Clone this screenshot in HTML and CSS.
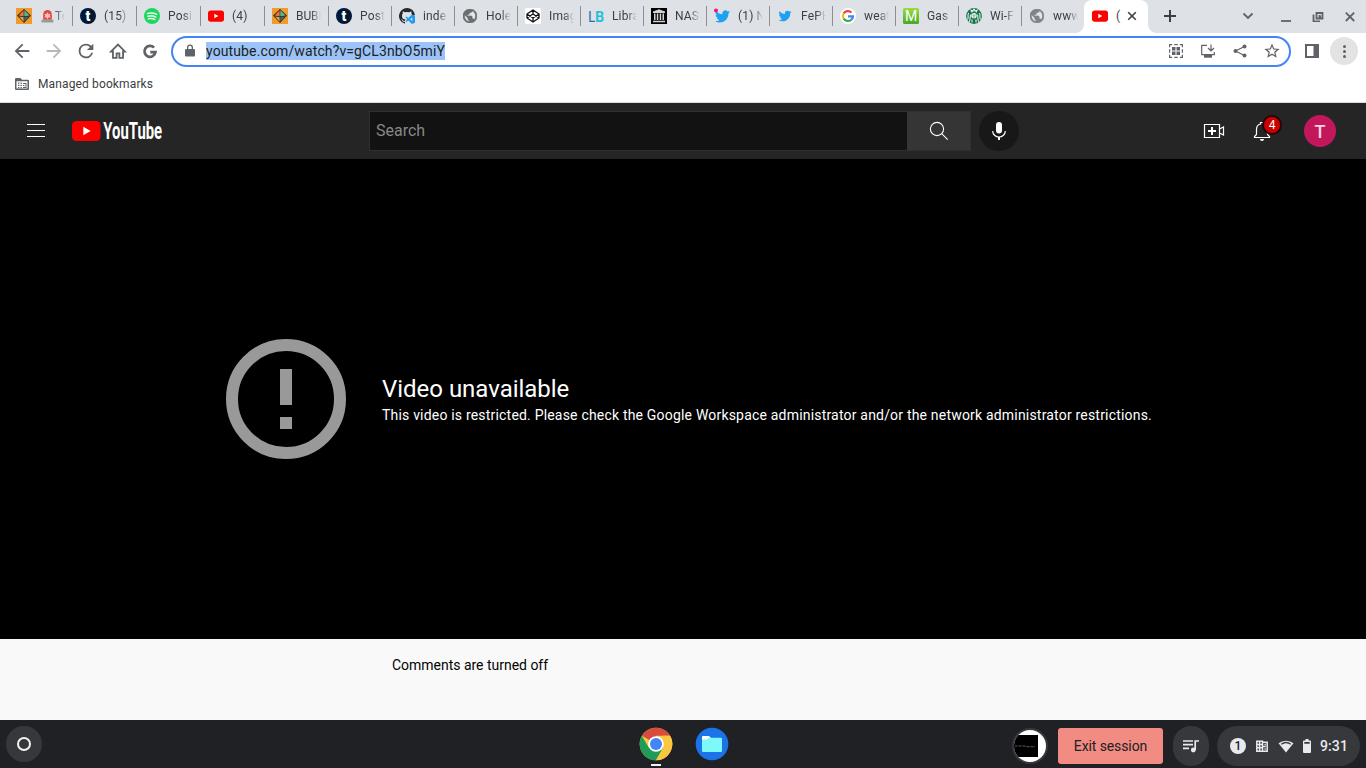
FILE: index.html
```html
<!DOCTYPE html>
<html lang="en">
<head>
<meta charset="utf-8">
<title>YouTube</title>
<link rel="stylesheet" href="styles.css">
</head>
<body>
<svg class="defs" width="0" height="0" aria-hidden="true">
  <symbol id="cube" viewBox="0 0 16 16"><path fill="#f29a2e" d="M0 0h16v16H0z"/><path fill="#3b2c2b" d="M8 1 15 7.500 8 15 1 7.500z"/><path fill="#e9783f" d="M7.600 2.500v5.800L2.600 7.400z"/><path fill="#5fb58c" d="M8.300 2.300v6l5.400-.9z"/><path fill="#35725c" d="M8.300 9.200v4.600L13 8.500z"/><path fill="#e2a04a" d="M7.600 9.200v4.600L3 8.500z"/></symbol>
  <symbol id="tumblr" viewBox="0 0 16 16"><circle cx="8" cy="8" r="8" fill="#001935"/><text x="8" y="12.600" text-anchor="middle" font-family="Roboto, sans-serif" font-weight="900" font-size="14" fill="#fff">t</text></symbol>
  <symbol id="ytfav" viewBox="0 0 16 16"><rect y="2.400" width="16" height="11.400" rx="2.800" fill="red"/><path fill="#fff" d="M6.300 5.800 10.400 8 6.300 10.300z"/></symbol>
  <symbol id="globe" viewBox="2 2 20 20"><circle cx="12" cy="12" r="9" fill="#e4e6ea"/><path fill="#6a6c70" stroke="#6a6c70" stroke-width=".9" d="M12 2C6.480 2 2 6.480 2 12s4.480 10 10 10 10-4.480 10-10S17.520 2 12 2zm-1 17.930c-3.950-.49-7-3.850-7-7.930 0-.62.080-1.210.210-1.790L9 15v1c0 1.100.900 2 2 2v1.930zm6.900-2.540c-.26-.81-1-1.390-1.900-1.390h-1v-3c0-.55-.45-1-1-1H8v-2h2c.55 0 1-.45 1-1V7h2c1.100 0 2-.9 2-2v-.41c2.930 1.190 5 4.060 5 7.410 0 2.080-.8 3.970-2.100 5.390z"/></symbol>
  <symbol id="bird" viewBox="0 0 24 24"><path fill="#1da1f2" d="M23.953 4.57a10 10 0 01-2.825.775 4.958 4.958 0 002.163-2.723c-.951.555-2.005.959-3.127 1.184a4.92 4.92 0 00-8.384 4.482C7.69 8.095 4.067 6.13 1.64 3.162a4.822 4.822 0 00-.666 2.475c0 1.71.87 3.213 2.188 4.096a4.904 4.904 0 01-2.228-.616v.06a4.923 4.923 0 003.946 4.827 4.996 4.996 0 01-2.212.085 4.936 4.936 0 004.604 3.417 9.867 9.867 0 01-6.102 2.105c-.39 0-.779-.023-1.17-.067a13.995 13.995 0 007.557 2.209c9.053 0 13.998-7.496 13.998-13.985 0-.21 0-.42-.015-.63A9.935 9.935 0 0024 4.59z"/></symbol>
</svg>

<div class="tabstrip">
  <div class="tab wide"><svg class="fav"><use href="#cube"/></svg><span class="title"><svg class="siren" viewBox="0 0 12 12"><path fill="#e8453c" d="M2 9V4a4 4 0 0 1 8 0v5z"/><path fill="#ffc9c0" d="m6 2 1 2 2-.5L8 5.300 9 7 7 6.700 6 8.500 5 6.700 3 7l1-1.700L3 3.500 5 4z"/><path fill="#8f9aa3" d="M.5 9h11v2.500H.5z"/></svg>To</span></div>
  <div class="tab wide"><svg class="fav"><use href="#tumblr"/></svg><span class="title">(15)</span></div>
  <div class="tab wide"><svg class="fav" viewBox="0 0 16 16"><circle cx="8" cy="8" r="8" fill="#1ed760"/><path fill="none" stroke="#e6f7ec" stroke-linecap="round" stroke-width="1.600" d="M3.600 5.600c3-.9 6.300-.6 9 .8M4 8.300c2.700-.8 5.300-.4 7.700.8M4.400 10.800c2.200-.6 4.400-.3 6.300.7"/></svg><span class="title">Posi</span></div>
  <div class="tab wide"><svg class="fav"><use href="#ytfav"/></svg><span class="title">(4)</span></div>
  <div class="tab wide"><svg class="fav"><use href="#cube"/></svg><span class="title tight">BUBE</span></div>
  <div class="tab"><svg class="fav"><use href="#tumblr"/></svg><span class="title">Post</span></div>
  <div class="tab"><svg class="fav" viewBox="0 0 16 16"><path fill="#24292e" d="M8 0a8 8 0 0 0-2.500 15.600c.4.100.5-.2.500-.4v-1.400c-2.200.5-2.700-1-2.700-1-.4-.8-.9-1.100-.9-1.100-.7-.5.100-.5.100-.5.800.1 1.200.8 1.200.8.700 1.200 1.900.9 2.300.7.100-.5.300-.9.500-1.100L4.500 11C3.300 10.300 3 9.200 3 7.700c0-1 .3-1.600.8-2.200-.1-.2-.4-1 .1-2.100 0 0 .700-.2 2.200.8a7.500 7.500 0 0 1 4 0c1.500-1 2.200-.8 2.200-.8.500 1.100.2 1.900.1 2.100.4.500.6 1 .7 1.700H16A8 8 0 0 0 8 0z"/><path fill="#1f9cf0" d="m13 6.500 3 1.300v7L13 16l-3.700-3.500L7.500 14l-1-.7 1.700-2-1.700-2 1-.8 1.800 1.500zm.3 3-2.200 1.800 2.200 1.800z"/></svg><span class="title">inde</span></div>
  <div class="tab"><svg class="fav sm"><use href="#globe"/></svg><span class="title">Hole</span></div>
  <div class="tab"><svg class="fav" viewBox="0 0 16 16"><rect width="16" height="16" rx="1.500" fill="#fff"/><path fill="none" stroke="#111" stroke-width="1.300" stroke-linejoin="round" d="M8 2 14 6v4l-6 4-6-4V6zM8 2v4M8 10v4M2 6l6 4 6-4M2 10l6-4 6 4"/></svg><span class="title">Imag</span></div>
  <div class="tab"><svg class="fav" viewBox="0 0 16 16"><text x="0" y="14" font-family="Lato, sans-serif" font-size="15" fill="#2472a4" textLength="7" lengthAdjust="spacingAndGlyphs">L</text><text x="7" y="14" font-family="Lato, sans-serif" font-weight="900" font-size="15" fill="#1fc2da" textLength="9" lengthAdjust="spacingAndGlyphs">B</text></svg><span class="title">Libra</span></div>
  <div class="tab"><svg class="fav" viewBox="0 0 16 16"><path d="M0 0h16v16H0z"/><path fill="#d4d4d4" d="M8 1.200 14 3.500V5H2V3.500zM3 5.600h1.500V12H3zM5.800 5.600h1.500V12H5.800zM8.700 5.600h1.500V12H8.700zM11.500 5.600H13V12h-1.500zM2 12.800h12v1.500H2z"/></svg><span class="title">NAS</span></div>
  <div class="tab"><svg class="fav" viewBox="0 0 16 16"><use href="#bird" x="1" y="1" width="15" height="15"/><circle cx="2" cy="2.500" r="2" fill="#f0147c"/></svg><span class="title">(1) N</span></div>
  <div class="tab"><svg class="fav" viewBox="0 0 16 16"><use href="#bird" x="1.500" y="1.500" width="13" height="13"/></svg><span class="title">FePH</span></div>
  <div class="tab"><svg class="fav" viewBox="0 0 16 16"><circle cx="8" cy="8" r="8" fill="#fff"/><g fill="none" stroke-width="2.200"><path stroke="#ea4335" d="M3.600 5.500a5 5 0 0 1 7.800-1"/><path stroke="#fbbc05" d="M3.600 5.500a5 5 0 0 0 0 5"/><path stroke="#34a853" d="M3.600 10.500a5 5 0 0 0 7.700 1.200"/><path stroke="#4285f4" d="M8 8.300h5a5 5 0 0 1-1.700 3.400"/></g></svg><span class="title">weat</span></div>
  <div class="tab"><svg class="fav" viewBox="0 0 16 16"><linearGradient id="lime" x2="0" y2="1"><stop stop-color="#9bdc45"/><stop offset="1" stop-color="#46aa27"/></linearGradient><rect width="16" height="16" rx="1.500" fill="url(#lime)"/><text x="8" y="13" text-anchor="middle" font-family="Roboto, sans-serif" font-size="14" fill="#fff">M</text></svg><span class="title">Gas</span></div>
  <div class="tab"><svg class="fav" viewBox="0 0 16 16"><circle cx="8" cy="8" r="7.900" fill="#17734d"/><path fill="none" stroke="#e9f3ee" stroke-width="1.100" d="M8 .8 9 3l2-.7-1 2.200M8 .8 7 3l-2-.7 1 2.200M5 6.500C3 9 5.500 10 3 14M11 6.500c2 2.500-.5 3.500 2 7.500M2.800 5C.5 8 3.600 9 1.400 11.500M13.200 5c2.300 3-.8 4 1.400 6.500M6 14.500v-3M10 14.500v-3"/><circle cx="8" cy="7.700" r="2.700" fill="#e9f3ee"/><path stroke="#17734d" stroke-width=".6" d="M6.500 7.200h3M7 9h2"/></svg><span class="title">Wi-F</span></div>
  <div class="tab"><svg class="fav sm faded"><use href="#globe"/></svg><span class="title">www</span></div>
  <div class="tab active"><svg class="fav"><use href="#ytfav"/></svg><span class="title">(</span><svg class="close" viewBox="0 0 10 10"><path d="m1.200 1.200 7.600 7.600m0-7.600-7.600 7.600"/></svg></div>
  <svg class="plus" viewBox="0 0 12 12"><path d="M6 0v12M0 6h12"/></svg>
  <div class="window-controls">
    <svg viewBox="0 0 12 12"><path d="m1.500 3.500 4.500 4.500 4.500-4.500"/></svg>
    <svg viewBox="0 0 12 12"><path d="M1 11h10"/></svg>
    <svg viewBox="0 0 12 12"><path d="M4.500 3h6v5.500h-6zM1.500 4.500v7H8M7.500 5v1.500H9"/></svg>
    <svg viewBox="0 0 12 12"><path d="m1.800 2.600 8.400 8.400m0-8.400-8.400 8.400"/></svg>
  </div>
</div>

<div class="toolbar">
  <div class="nav">
    <svg viewBox="0 0 24 24"><path d="M20 11H7.830l5.590-5.590L12 4l-8 8 8 8 1.410-1.410L7.830 13H20z"/></svg>
    <svg class="off" viewBox="0 0 24 24"><path d="m12 4-1.410 1.410L16.170 11H4v2h12.170l-5.580 5.590L12 20l8-8z"/></svg>
    <svg viewBox="0 0 24 24"><path d="M17.650 6.350A7.960 7.960 0 0 0 12 4a8 8 0 1 0 7.730 10h-2.080A6 6 0 1 1 12 6c1.660 0 3.140.69 4.220 1.780L13 11h7V4z"/></svg>
    <svg viewBox="0 0 24 24"><path fill="none" stroke="#5f6368" stroke-width="2" d="M4.500 12.500 12 5l7.500 7.500H17.500v7h-4v-5h-3v5h-4v-7z"/></svg>
    <svg viewBox="0 0 24 24"><path fill="none" stroke="#5f6368" stroke-width="3" d="M16.400 8.300a6 6 0 1 0 1.500 5h-5.600"/></svg>
  </div>
  <div class="omnibox">
    <svg class="lock" viewBox="0 0 10 14"><path d="M9 5H8V3.500a3 3 0 0 0-6 0V5H1a1 1 0 0 0-1 1v5.500a1 1 0 0 0 1 1h8a1 1 0 0 0 1-1V6a1 1 0 0 0-1-1zM3.300 5V3.500a1.700 1.700 0 0 1 3.400 0V5z"/></svg>
    <span class="url">youtube.com/watch?v=gCL3nbO5miY</span>
    <div class="actions">
      <svg viewBox="0 0 16 16"><path class="ln" d="M1.600 4.200V1.600h2.600M6.300 1.600h3.400M11.800 1.600h2.600v2.600M14.400 6.300v3.400M14.400 11.800v2.600h-2.600M9.700 14.400H6.300M4.200 14.400H1.600v-2.600M1.600 9.700V6.300"/><path d="M4 4h3.500v3.500H4zM8.500 4H12v3.500H8.500zM4 8.500h3.500V12H4zM8.500 8.500H12V12H8.500z"/></svg>
      <svg viewBox="0 0 16 16"><path class="ln" d="M7 2.300H1.700v9.400h12.600V9M11 1.500v6M8 5l3 3 3-3"/><path d="M4 12h8v2.700H4z"/></svg>
      <svg viewBox="0 0 16 16"><path class="ln" d="M12.500 3.500 3.500 8l9 4.500"/><circle cx="12.500" cy="3.500" r="2"/><circle cx="3.500" cy="8" r="2"/><circle cx="12.500" cy="12.500" r="2"/></svg>
      <svg viewBox="1.500 1.500 21 21"><path d="m22 9.240-7.190-.62L12 2 9.190 8.630 2 9.240l5.460 4.730L5.820 21 12 17.270 18.180 21l-1.630-7.030zM12 15.400l-3.760 2.270 1-4.280-3.320-2.880 4.380-.38L12 6.100l1.710 4.040 4.380.38-3.320 2.880 1 4.280z"/></svg>
    </div>
  </div>
  <svg class="panel" viewBox="0 0 14 14"><path d="M0 0h14v14H0zm2 2v10h6.500V2z" fill-rule="evenodd"/></svg>
  <div class="more"><i></i><i></i><i></i></div>
</div>

<div class="bookmarks">
  <svg viewBox="0 0 14 12"><path fill-rule="evenodd" d="M1 0h4.500L7 1.700h6a1 1 0 0 1 1 1V11a1 1 0 0 1-1 1H1a1 1 0 0 1-1-1V1a1 1 0 0 1 1-1zm.5 3.300v7.200h11V3.300z"/><path d="M3 4.500h1.400v1.300H3zM5.500 4.500h1.400v1.300H5.500zM3 6.700h1.400V8H3zM5.500 6.700h1.400V8H5.500zM3 8.900h1.400v1.300H3zM5.500 8.900h1.400v1.300H5.500zM8 5h3.500v1H8zM10.500 5h1v5h-1zM8 7h1.400v1H8zM8 9h3.500v1H8z"/></svg>
  <span>Managed bookmarks</span>
</div>

<header class="masthead">
  <div class="burger"><i></i><i></i><i></i></div>
  <svg class="logo" viewBox="0 0 92 22"><rect y="1" width="28.500" height="20" rx="4.500" fill="red"/><path fill="#fff" d="M11.300 6.800v8.500l7.300-4.250z"/><text x="31.300" y="19.300" font-family="Roboto, sans-serif" font-weight="700" font-size="24" fill="#fff" textLength="58.800" lengthAdjust="spacingAndGlyphs">YouTube</text></svg>
  <div class="search"><div class="field">Search</div><div class="go"><svg viewBox="0 0 24 24"><circle cx="10" cy="10" r="6.600"/><path d="m14.700 14.700 6 6"/></svg></div></div>
  <div class="mic"><svg viewBox="0 0 24 24"><rect x="9" y="3" width="6" height="11.500" rx="3" fill="#fff"/><path fill="none" stroke="#fff" stroke-width="1.200" d="M5.700 12a6.300 6 0 0 0 12.600 0"/><path stroke="#fff" stroke-width="2" d="M12 18v3"/></svg></div>
  <div class="account">
    <svg viewBox="0 0 24 24"><path d="M2.500 5.500h15v13h-15zM17.500 10l4-2v8l-4-2"/><path stroke-width="2" d="M10 8v8M6 12h8"/></svg>
    <div class="bell"><svg viewBox="0 0 24 24"><path d="M4.500 18.500v-1l2-2v-5c0-3 1.500-5 4-5.500V3.500h3V5c2.500.5 4 2.500 4 5.500v5l2 2v1z"/><path fill="#fff" stroke="none" d="M10 20h4a2 2 0 0 1-4 0z"/></svg><span class="badge">4</span></div>
    <div class="avatar">T</div>
  </div>
</header>

<main class="player">
  <svg viewBox="0 0 120 120"><circle cx="60" cy="60" r="54" fill="none" stroke="#999" stroke-width="12"/><path fill="#999" d="M54 30h12v36H54zM54 78h12v12H54z"/></svg>
  <div class="message"><h1>Video unavailable</h1><p>This video is restricted. Please check the Google Workspace administrator and/or the network administrator restrictions.</p></div>
</main>
<section class="comments">Comments are turned off</section>

<footer class="shelf">
  <div class="round launcher"><i></i></div>
  <div class="apps">
    <div class="app running"><svg viewBox="0 0 34 34"><circle cx="17" cy="17" r="16.300" fill="#fbc640"/><path fill="#d84b40" d="M2.900 8.800a16.300 16.300 0 0 1 28.200 0H17v8z"/><path fill="#1e9c58" d="M2.900 8.800A16.300 16.300 0 0 0 17 33.300l7-12.200-7-4.100-7 4.100z"/><path fill="#fbc640" d="M31.100 8.800A16.300 16.300 0 0 1 17 33.300l7-12.200V8.800z"/><circle cx="17" cy="17" r="7.800" fill="#fff"/><circle cx="17" cy="17" r="6" fill="#4285f4"/></svg></div>
    <div class="app"><svg viewBox="0 0 34 34"><circle cx="17" cy="17" r="16.300" fill="#1a73e8"/><path fill="#fff" d="M7 10a1 1 0 0 1 1-1h6l2.500 2.500V15H7z"/><path fill="#7cf9f8" d="M7 12.500h5l2-1.700h12a1 1 0 0 1 1 1V24a1 1 0 0 1-1 1H8a1 1 0 0 1-1-1z"/></svg></div>
  </div>
  <div class="status">
    <div class="round thumb"><svg viewBox="0 0 32 32"><clipPath id="disc"><circle cx="16" cy="16" r="16"/></clipPath><g clip-path="url(#disc)"><path fill="#fff" d="M0 0h32v32H0z"/><path d="M0 5h24v22H0z"/><path stroke="#777" stroke-width=".8" stroke-dasharray="2 .6 1 .5" fill="none" d="M1 16h10l1 .7h9"/></g></svg></div>
    <div class="exit">Exit session</div>
    <div class="round media"><svg viewBox="0 0 18 16"><path fill="none" stroke="#e8eaed" stroke-width="1.700" d="M1 3h10M1 6.700h10M1 10.400h6M13.200 12V3H17"/><circle cx="11.300" cy="12" r="2.400" fill="#e8eaed"/></svg></div>
    <div class="tray">
      <span class="count">1</span>
      <svg viewBox="0 0 14 14"><path fill="none" stroke="#e8eaed" stroke-width="1.500" d="M1.800 2.200h5.700v10H1.800zM4.600 2.200v10M1.800 5.500h5.700M1.800 8.800h5.700M7.500 3.200h4.700v9H7.500M7.500 7.600h3.300M9.500 5.400h1.300M9.500 9.900h1.300"/></svg>
      <svg class="wifi" viewBox="0 0 16 14"><path fill="#e8eaed" d="M8 13.500.5 4.300a12 12 0 0 1 15 0z"/><path fill="none" stroke="#3c3d40" stroke-width="1.300" d="M3.200 5.300a8 8 0 0 1 9.600 0"/></svg>
      <svg class="battery" viewBox="0 0 8 14"><path fill="#e8eaed" fill-rule="evenodd" d="M2.500 0h3v1.500H7a1 1 0 0 1 1 1V13a1 1 0 0 1-1 1H1a1 1 0 0 1-1-1V2.500a1 1 0 0 1 1-1h1.500zM1.300 3v1.700h5.400V3z"/></svg>
      <span class="time">9:31</span>
    </div>
  </div>
</footer>
</body>
</html>
```
FILE: styles.css
```css
* { box-sizing: border-box; }
body { margin: 0; width: 1366px; height: 768px; overflow: hidden; display: flex; flex-direction: column; background: #fff; font-family: Roboto, sans-serif; }
svg { display: block; flex: none; }
.defs { position: absolute; }

.tabstrip { flex: none; height: 33px; padding-left: 8px; display: flex; background: #dee1e6; color: #3c4043; font-size: 12px; }
.tab { flex: none; width: 63px; display: flex; align-items: center; padding: 0 8px 1px; position: relative; }
.tab.wide { width: 64px; }
.tab + .tab:not(.active)::before { content: ""; position: absolute; left: 0; top: 6px; width: 1px; height: 20px; background: #8b8f95; }
.fav { width: 16px; height: 16px; }
.fav.sm { width: 14px; height: 14px; margin: 0 1px; }
.faded { opacity: .8; }
.title { flex: none; display: flex; align-items: center; white-space: pre; overflow: hidden; width: 25px; height: 20px; margin-left: 8px; letter-spacing: .15px; -webkit-mask-image: linear-gradient(90deg, #000 60%, transparent); mask-image: linear-gradient(90deg, #000 60%, transparent); }
.title.tight { letter-spacing: -.1px; }
.siren { width: 13px; height: 13px; margin: 0 1px; }
.tab.active { width: 64px; background: #fff; border-radius: 8px 8px 0 0; }
.tab.active::before, .tab.active::after { content: ""; position: absolute; bottom: 0; width: 8px; height: 8px; }
.tab.active::before { left: -8px; background: radial-gradient(circle at 0 0, transparent 7.5px, #fff 8px); }
.tab.active::after { right: -8px; background: radial-gradient(circle at 100% 0, transparent 7.5px, #fff 8px); }
.tab.active .title { width: 6px; mask-image: none; -webkit-mask-image: none; }
.close { width: 10px; height: 10px; margin-left: 5px; stroke: #3c4043; stroke-width: 1.6; }
.plus { width: 12px; height: 12px; margin: 10px 0 0 16px; stroke: #3c4043; stroke-width: 2; }
.window-controls { margin-left: auto; padding: 10px 10px 0 0; display: flex; gap: 20px; }
.window-controls svg { width: 12px; height: 12px; fill: none; stroke: #5f6368; stroke-width: 1.8; }
.window-controls svg:first-child { margin-right: 6px; }

.toolbar { flex: none; height: 36px; display: flex; align-items: center; padding-left: 11px; }
.nav { display: flex; gap: 10px; width: 160px; fill: #5f6368; }
.nav svg { width: 22px; height: 22px; }
.nav .off { opacity: .45; }
.omnibox { width: 1120px; height: 31px; border: 2px solid #4285f4; border-radius: 16px; display: flex; align-items: center; padding: 0 9px 0 12px; }
.lock { width: 10px; height: 14px; fill: #5f6368; }
.url { margin-left: 11px; height: 18px; line-height: 18px; font-size: 14px; letter-spacing: .12px; color: #202124; background: #9cc3f8; }
.actions { margin-left: auto; display: flex; gap: 16px; fill: #5f6368; }
.actions svg { width: 16px; height: 16px; }
.ln { fill: none; stroke: #5f6368; stroke-width: 1.2; }
.panel { width: 14px; height: 14px; margin-left: 14px; fill: #5f6368; }
.more { width: 28px; height: 28px; margin-left: 11px; border-radius: 50%; background: #e3e3e3; display: flex; flex-direction: column; align-items: center; justify-content: center; gap: 2px; }
.more i { width: 3px; height: 3px; border-radius: 50%; background: #5f6368; }

.bookmarks { flex: none; height: 34px; border-bottom: 1px solid #dadce0; display: flex; align-items: center; gap: 9px; padding: 0 0 3px 15px; font-size: 12px; letter-spacing: .13px; color: #3c4043; }
.bookmarks svg { width: 14px; height: 12px; fill: #5f6368; }

.masthead { flex: none; height: 56px; background: #252525; display: flex; align-items: center; padding: 0 30px 0 27px; }
.burger { width: 18px; display: flex; flex-direction: column; gap: 5px; margin-top: -1px; }
.burger i { height: 1px; background: #fff; }
.logo { width: 92px; height: 22px; margin-left: 27px; }
.search { display: flex; margin-left: 205px; width: 602px; height: 40px; border: 1px solid #303030; }
.field { flex: 1; background: #121212; color: #888; font-size: 16px; line-height: 38px; padding-left: 6px; }
.go { width: 63px; background: #353535; display: flex; align-items: center; justify-content: center; }
.go svg { width: 24px; height: 24px; fill: none; stroke: #fff; stroke-width: 1.1; }
.mic { width: 40px; height: 40px; margin-left: 8px; border-radius: 50%; background: #181818; display: flex; align-items: center; justify-content: center; }
.mic svg { width: 24px; height: 24px; }
.account { margin-left: auto; display: flex; align-items: center; }
.account svg { width: 24px; height: 24px; fill: none; stroke: #fff; stroke-width: 1.2; }
.bell { position: relative; margin: 0 30px 0 24px; }
.badge { position: absolute; left: 12px; top: -4px; width: 20px; height: 20px; border: 2px solid #2b0000; border-radius: 50%; background: #c00; color: #fff; font-size: 12px; line-height: 16px; text-align: center; }
.avatar { width: 32px; height: 32px; border-radius: 50%; background: #c2185b; color: #f6d5e1; font-size: 18px; font-weight: 500; line-height: 33px; text-align: center; }

.player { flex: none; height: 480px; background: #000; display: flex; align-items: center; padding-left: 226px; color: #fff; }
.player > svg { width: 120px; height: 120px; }
.message { margin-left: 36px; }
.message h1 { margin: 0; font-size: 24px; font-weight: 400; line-height: 30px; letter-spacing: -.02px; }
.message p { margin: 1px 0 0; font-size: 14px; line-height: 20px; letter-spacing: .193px; white-space: nowrap; }
.comments { flex: none; height: 81px; background: #f9f9f9; padding: 16px 0 0 392px; font-size: 14px; line-height: 20px; letter-spacing: -.02px; color: #030303; }

.shelf { flex: none; height: 48px; background: #202124; display: grid; grid-template-columns: 1fr 90px 1fr; align-items: center; padding: 0 6px; }
.round { width: 36px; height: 36px; border-radius: 50%; background: #37383b; display: flex; align-items: center; justify-content: center; }
.launcher i { width: 14px; height: 14px; border: 2px solid #f1f3f4; border-radius: 50%; }
.apps { display: flex; gap: 22px; padding-left: 1px; }
.app { position: relative; }
.app svg { width: 34px; height: 34px; }
.running::after { content: ""; position: absolute; left: 12px; bottom: -5px; width: 10px; height: 2px; background: #f1f3f4; }
.status { display: flex; justify-content: flex-end; align-items: center; margin-top: 4px; }
.thumb svg { width: 32px; height: 32px; }
.media { height: 40px; border-radius: 18px; }
.media svg { width: 18px; height: 16px; }
.exit { width: 105px; height: 36px; margin: 0 10px; border-radius: 3px; background: #f28b82; color: #202124; font-size: 14px; line-height: 36px; letter-spacing: -.1px; text-align: center; }
.tray { width: 143px; height: 40px; margin-left: 8px; border-radius: 20px; background: #37383b; display: flex; align-items: center; padding-left: 13px; color: #e8eaed; }
.count { width: 16px; height: 16px; border-radius: 50%; background: #e8eaed; color: #202124; font-size: 12px; font-weight: 500; line-height: 16px; text-align: center; }
.tray svg { width: 14px; height: 14px; margin-left: 9px; }
.tray .wifi { width: 16px; }
.tray .battery { width: 8px; margin-left: 9px; }
.time { margin-left: 9px; font-size: 14px; font-weight: 500; letter-spacing: .1px; }
```
